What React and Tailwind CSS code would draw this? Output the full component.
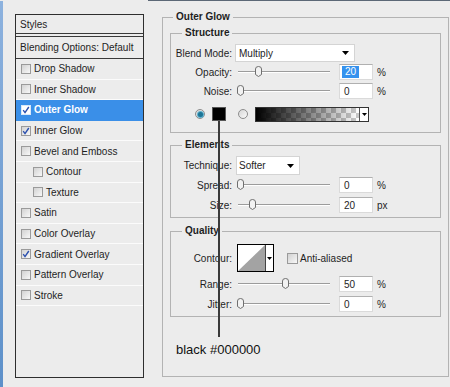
import React from 'react';

const items = [
  { label: 'Drop Shadow' },
  { label: 'Inner Shadow' },
  { label: 'Outer Glow', checked: true, active: true },
  { label: 'Inner Glow', checked: true },
  { label: 'Bevel and Emboss' },
  { label: 'Contour', indent: true },
  { label: 'Texture', indent: true },
  { label: 'Satin' },
  { label: 'Color Overlay' },
  { label: 'Gradient Overlay', checked: true },
  { label: 'Pattern Overlay' },
  { label: 'Stroke' },
];

const Arrow = () => (
  <svg width="7" height="4" viewBox="0 0 7 4">
    <path d="M0 0h7L3.5 4z" fill="#000" />
  </svg>
);

const CheckBox = ({ checked, active }) => (
  <span
    className={`w-[10px] h-[10px] shrink-0 border flex items-center justify-center ${
      active ? 'border-[#d8e8f8] bg-white' : 'border-[#9a9a9a] bg-linear-to-br from-[#d2d2d2] to-[#f8f8f8]'
    }`}
  >
    {checked && (
      <svg width="8" height="8" viewBox="0 0 8 8">
        <path d="M1.2 4.2 L3 6.6 L6.8 1" stroke="#2a4fae" strokeWidth="1.4" fill="none" />
      </svg>
    )}
  </span>
);

const Thumb = () => (
  <svg width="7" height="11" viewBox="0 0 7 11">
    <path d="M0.5 3 Q0.5 0.5 3.5 0.5 Q6.5 0.5 6.5 3 L6.5 8.5 L3.5 10.5 L0.5 8.5 Z" fill="#f2f2f2" stroke="#6f6f6f" />
  </svg>
);

// track runs from x=238 to x=330; center is the thumb centre in page pixels
const Slider = ({ center }) => (
  <div className="relative ml-[6px] w-[92px] h-[12px] shrink-0">
    <div className="absolute left-0 right-0 top-[5px] h-[2px] border-t border-[#9c9c9c] border-b border-b-white" />
    <div className="absolute top-0 flex" style={{ left: center - 238 - 3 }}>
      <Thumb />
    </div>
  </div>
);

const NumBox = ({ value, selected }) => (
  <div className="ml-[9px] w-[34px] h-[16px] bg-white border border-[#dadada] border-t-[#b0b0b0] flex items-center shrink-0">
    {selected ? (
      <span className="ml-[2px] px-[3px] bg-[#3592ee] text-white leading-[12px]">{value}</span>
    ) : (
      <span className="pl-[4px]">{value}</span>
    )}
  </div>
);

const SliderRow = ({ label, center, value, unit, selected, className = '' }) => (
  <div className={`flex items-center h-[16px] ${className}`}>
    <span className="w-[61px] text-right shrink-0">{label}</span>
    <Slider center={center} />
    <NumBox value={value} selected={selected} />
    <span className="ml-[4px]">{unit}</span>
  </div>
);

const Radio = ({ on }) => (
  <span className="w-[10px] h-[10px] rounded-full border border-[#8c8c8c] bg-linear-to-br from-[#d6d6d6] to-[#fbfbfb] flex items-center justify-center shrink-0">
    {on && <span className="w-[5px] h-[5px] rounded-full bg-[#1d7596] shadow-[0_0_0_1px_#5fb0cc]" />}
  </span>
);

const Group = ({ title, className = '', children }) => (
  <fieldset className={`w-[271px] border border-[#b3b3b3] ${className}`}>
    <legend className="ml-[11px] px-[3px] font-bold leading-[12px]">{title}</legend>
    {children}
  </fieldset>
);

export default function App() {
  return (
    <div className="w-[450px] h-[387px] bg-[#ececec] relative overflow-hidden flex flex-col text-[10px] text-[#1e1e1e] font-['Liberation_Sans',Arial,sans-serif]">
      <div className="h-[1px] ml-[148px] bg-[#5c6876] shrink-0" />
      <div className="flex flex-1 items-start">
        <div className="w-[3px] self-stretch bg-linear-to-b from-[#8db2de] to-[#5d90c9]" />

        {/* styles list */}
        <div className="mt-[13px] ml-[12px] w-[129px] h-[364px] border border-[#2e2e2e] flex flex-col">
          <div className="h-[19px] border-b border-[#3a3a3a] pl-[4px] flex items-center">Styles</div>
          <div className="h-[2px]" />
          <div className="h-[23px] border-y border-[#3a3a3a] pl-[4px] flex items-center">Blending Options: Default</div>
          {items.map((it) => (
            <div
              key={it.label}
              className={`h-[20.6px] flex items-center border-b ${it.indent ? 'pl-[17px]' : 'pl-[5px]'} ${
                it.active ? 'bg-[#3a8fe8] text-white font-bold border-[#3a8fe8]' : 'border-[#fbfbfb]'
              }`}
            >
              <CheckBox checked={it.checked} active={it.active} />
              <span className="ml-[3px]">{it.label}</span>
            </div>
          ))}
        </div>

        {/* outer glow panel */}
        <fieldset className="ml-[18px] mt-[10px] w-[286px] h-[366px] border border-[#b3b3b3] px-[7px] pt-[4px]">
          <legend className="ml-[3px] px-[3px] font-bold leading-[12px]">Outer Glow</legend>

          <Group title="Structure" className="pt-[5px] pb-[10px]">
            <div className="flex items-center h-[18px]">
              <span className="w-[61px] text-right shrink-0">Blend Mode:</span>
              <div className="ml-[3px] w-[120px] h-[18px] bg-white border border-[#d4d4d4] flex items-center justify-between pl-[3px] pr-[5px]">
                <span>Multiply</span>
                <Arrow />
              </div>
            </div>
            <SliderRow label="Opacity:" center={258} value="20" unit="%" selected className="mt-[2px]" />
            <SliderRow label="Noise:" center={240} value="0" unit="%" className="mt-[3px]" />
            <div className="flex items-center h-[16px] mt-[7px]">
              <span className="ml-[24px]"><Radio on /></span>
              <span className="ml-[7px] w-[14px] h-[14px] bg-black border border-[#555]" />
              <span className="ml-[12px]"><Radio /></span>
              <div className="ml-[7px] w-[114px] h-[15px] border border-[#333] flex">
                <div className="flex-1 bg-[repeating-conic-gradient(#c9c9c9_0%_25%,#ffffff_0%_50%)] bg-[length:10px_10px]">
                  <div className="w-full h-full bg-linear-to-r from-black to-transparent" />
                </div>
                <div className="w-[9px] bg-white border-l border-[#555] flex items-center justify-center">
                  <svg width="5" height="3" viewBox="0 0 5 3"><path d="M0 0h5L2.5 3z" fill="#000" /></svg>
                </div>
              </div>
            </div>
          </Group>

          <Group title="Elements" className="mt-[6px] pt-[5px] pb-[4px]">
            <div className="flex items-center h-[19px]">
              <span className="w-[61px] text-right shrink-0">Technique:</span>
              <div className="ml-[4px] w-[64px] h-[19px] bg-white border border-[#d4d4d4] flex items-center justify-between pl-[2px] pr-[5px]">
                <span>Softer</span>
                <Arrow />
              </div>
            </div>
            <SliderRow label="Spread:" center={240} value="0" unit="%" className="mt-[2px]" />
            <SliderRow label="Size:" center={252} value="20" unit="px" className="mt-[4px]" />
          </Group>

          <Group title="Quality" className="mt-[7px] pt-[7px] pb-[4px]">
            <div className="flex items-center h-[28px]">
              <span className="w-[61px] text-right shrink-0">Contour:</span>
              <div className="ml-[5px] w-[37px] h-[28px] border border-black flex bg-white">
                <svg width="27" height="26" viewBox="0 0 27 26" className="shrink-0">
                  <path d="M0 26 L27 0 L27 26 Z" fill="#a3a3a3" />
                </svg>
                <div className="flex-1 border-l border-[#444] flex items-center justify-center">
                  <svg width="5" height="3" viewBox="0 0 5 3"><path d="M0 0h5L2.5 3z" fill="#000" /></svg>
                </div>
              </div>
              <span className="ml-[13px]"><span className="flex w-[11px] h-[11px] border border-[#9a9a9a] bg-linear-to-br from-[#d2d2d2] to-[#f8f8f8]" /></span>
              <span className="ml-[2px]">Anti-aliased</span>
            </div>
            <SliderRow label="Range:" center={285} value="50" unit="%" className="mt-[4px]" />
            <SliderRow label="Jitter:" center={240} value="0" unit="%" className="mt-[4px]" />
          </Group>

          <p className="mt-[25px] ml-[6px] text-[13px] leading-[15px] text-[#111]">black #000000</p>
        </fieldset>
      </div>

      {/* annotation line from the colour swatch */}
      <div className="absolute left-[218px] top-[121px] w-[2px] h-[216px] bg-[#3a3a3a]" />
    </div>
  );
}
